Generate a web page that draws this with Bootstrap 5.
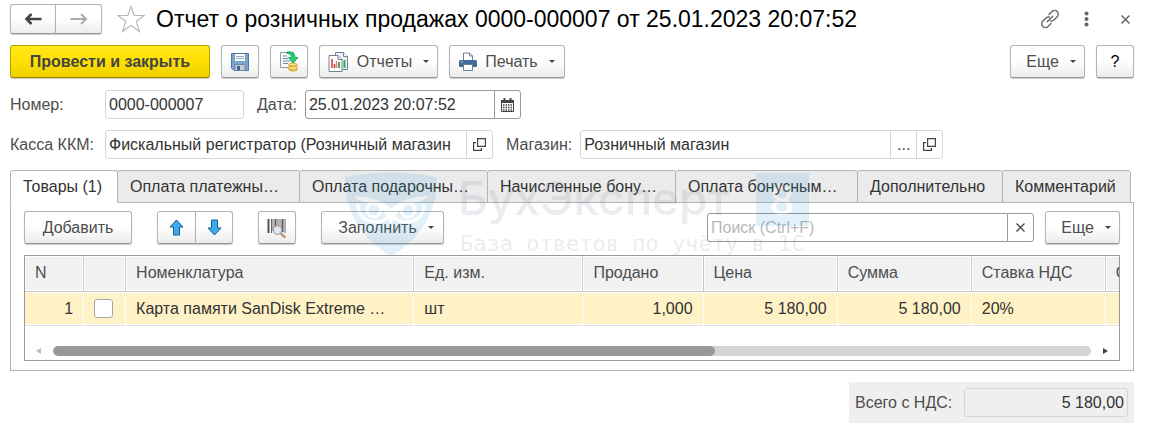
<!DOCTYPE html>
<html lang="ru">
<head>
<meta charset="utf-8">
<meta name="viewport" content="width=device-width, initial-scale=1">
<title>Отчет о розничных продажах</title>
<link href="https://cdn.jsdelivr.net/npm/bootstrap@5.3.0/dist/css/bootstrap.min.css" rel="stylesheet">
<style>
:root { --line: #b3b3b3; --soft: #d6d6d6; --ink: #333; --label: #4d4d4d; }
body { font-family: "Liberation Sans", Arial, sans-serif; font-size: 16px; line-height: 20px; color: var(--ink); background: #fff; }
.page-wrap { padding: 4px 19px 6px 10px; }
.doc-title { font-size: 23px; line-height: 30px; color: #000; font-weight: 400; margin: 0 0 0 11px; }
.ui-btn { --bs-btn-color: #4d4d4d; --bs-btn-border-color: #b3b3b3; --bs-btn-hover-color: #4d4d4d; --bs-btn-hover-border-color: #999;
  --bs-btn-font-size: 16px; --bs-btn-line-height: 20px; --bs-btn-padding-x: 0; --bs-btn-padding-y: 0; --bs-btn-border-radius: 3px;
  height: 33px; display: inline-flex; align-items: center; justify-content: center; flex: none;
  background-image: linear-gradient(#fff, #fff 45%, #ececec); border-bottom-color: #999; box-shadow: 0 1px 1px #c8c8c8; }
.ui-btn-main { --bs-btn-color: #444; width: 200px; font-weight: 700; border-color: #b8a000; border-bottom-color: #998500;
  background-image: linear-gradient(#ffe81a, #ffe000 50%, #edd000); }
.icon-btn { width: 38px; }
.nav-pair .ui-btn { width: 46px; height: 30px; }
.nav-pair .ui-btn + .ui-btn { width: 47px; }
.star-btn { margin-left: 15px; }
.move-pair { margin: 0 25px; }
.move-pair .ui-btn { width: 39px; }
.move-pair .ui-btn + .ui-btn { width: 38px; }
.toolbar-main { gap: 11px; margin-bottom: 12px; }
.row-gap { margin-top: 11px; }
.caret { width: 0; height: 0; border: 3px solid transparent; border-top-color: #444; border-bottom: 0; margin-left: 11px; }
.more-btn { width: 75px; padding-left: 7px; }
.fill-btn { width: 123px; padding-left: 7px; margin-left: 25px; }
.find-more { margin-left: 11px; }
.drop-a { width: 119px; } .drop-b { width: 116px; } .add-btn { width: 108px; }
.bare { border: 0; background: none; padding: 0; display: flex; color: #666; }
.field-label { color: var(--label); white-space: nowrap; }
.field-label.first { width: 95px; flex: none; }
.field-label.next { margin: 0 8px 0 13px; }
.field { height: 29px; }
.field .form-control { height: 29px; min-height: 0; font-size: 16px; line-height: 20px; padding: 0 3px; color: var(--ink); border-color: var(--soft); border-radius: 3px; background: #fff; }
.field .form-control::placeholder { color: #b8b8b8; }
.field .side-btn { width: 27px; padding: 0; border: 1px solid var(--soft); background: #fff; border-radius: 3px; display: flex; align-items: center; justify-content: center; color: #444; font-size: 16px; line-height: 20px; }
.field.dark .form-control, .field.dark .side-btn { border-color: #999; }
.w-num { width: 139px; flex: none; } .w-date { width: 216px; flex: none; } .w-kassa { width: 388px; } .w-shop { width: 363px; } .w-find { width: 327px; } .w-total { width: 164px; }
.doc-tabs { --bs-nav-tabs-border-width: 0; height: 32px; flex-wrap: nowrap; position: relative; z-index: 1; padding-right: 4px; }
.doc-tabs .nav-item { min-width: 0; flex: none; margin-left: -1px; }
.doc-tabs .nav-item:first-child { margin-left: 0; }
.doc-tabs .nav-link { height: 33px; width: 100%; margin: 0; padding: 5px 12px; color: var(--ink); background: #ebebeb; border: 1px solid var(--line); border-radius: 3px 3px 0 0; white-space: nowrap; overflow: hidden; text-overflow: ellipsis; text-align: left; }
.doc-tabs .nav-link.active { background: #fff; color: var(--ink); border-color: var(--line) var(--line) #fff; }
.tab-a { width: 108px; } .tab-b { width: 183px; } .tab-c { width: 189px; } .tab-d { width: 146px; } .tab-e { width: 129px; }
.tab-body { border: 1px solid var(--line); padding: 8px 13px 9px; }
.grid-box { border: 1px solid #999; overflow: hidden; margin-top: 11px; }
.goods { table-layout: fixed; width: 1215px; margin: 0; border-collapse: separate; border-spacing: 0; }
.goods th { height: 36px; padding: 0 10px 2px; font-weight: 400; color: var(--label); background: #f1f1f1; border-right: 1px solid #c8c8c8; border-bottom: 1px solid #c8c8c8; box-shadow: inset 1px 1px #fff, inset -1px -1px #fff; }
.goods td { height: 34px; padding: 0 10px; background: #fef2c6; border-right: 1px solid #fff; border-bottom: 1px solid #e2e2e2; box-shadow: inset 0 1px #fff, inset 0 -1px #fff; white-space: nowrap; overflow: hidden; text-overflow: ellipsis; }
.goods .form-check-input { width: 19px; height: 19px; margin: 0; display: block; border-color: #a6a6a6; border-radius: 3px; }
.c-n { width: 59px; } .c-chk { width: 42px; } .c-name { width: 288px; } .c-unit { width: 169px; } .c-qty { width: 120px; } .c-sum { width: 134px; }
.scroll-row { padding: 20px 11px 4px; }
.scroll-track { height: 10px; border-radius: 5px; background: #d4d4d4; margin: 0 12px; overflow: hidden; }
.scroll-thumb { height: 10px; border-radius: 5px; background: #999; }
.totals { width: 285px; background: #efefef; padding: 6px; margin-top: 11px; }
.totals .form-control { background: #efefef; text-align: right; }
.stamp { opacity: .15; pointer-events: none; z-index: 5; }
.stamp-name { font: 500 46px Inter, sans-serif; } .stamp-sub { font: 22px "DejaVu Sans Mono", monospace; } .stamp-num { font: 500 40px Inter, sans-serif; }
</style>
</head>
<body>
<main class="page-wrap">
  <header class="d-flex align-items-center">
    <div class="btn-group nav-pair">
      <button class="btn ui-btn" type="button" aria-label="Назад"><svg width="18" height="12" viewBox="0 0 18 12" fill="none" stroke="#444" stroke-width="2.6"><path d="M17.500 6H3M7.500 1 2.500 6l5 5"/></svg></button>
      <button class="btn ui-btn" type="button" aria-label="Вперед"><svg width="18" height="12" viewBox="0 0 18 12" fill="none" stroke="#aaa" stroke-width="2"><path d="M.5 6H16M11 1l5 5-5 5"/></svg></button>
    </div>
    <button class="bare star-btn" type="button" aria-label="В избранное"><svg width="28" height="28" viewBox="0 0 28 28" fill="#fff" stroke="#b4b9bf" stroke-width="1.200"><path d="M14 1.500 17.200 10.500H27L19.200 16.500 22.500 26.500 14 20.500 5.500 26.500 8.800 16.500 1 10.500H10.800Z"/></svg></button>
    <h1 class="doc-title">Отчет о розничных продажах 0000-000007 от 25.01.2023 20:07:52</h1>
    <div class="d-flex align-items-center ms-auto">
      <button class="bare" type="button" aria-label="Ссылка"><svg width="20" height="20" viewBox="0 0 20 20" fill="none" stroke="#6a6a6a" stroke-width="1.500" stroke-linecap="round"><path d="M9 5.500 12 2.500a3.600 3.600 0 0 1 5.200 5.200L13.700 11.200a3.600 3.600 0 0 1-3 .8M11 14.500 8 17.500a3.600 3.600 0 0 1-5.200-5.200L6.300 8.800a3.600 3.600 0 0 1 3-.8M7.300 12.700 12.700 7.300"/></svg></button>
      <button class="bare ms-4" type="button" aria-label="Меню"><svg width="5" height="16" viewBox="0 0 5 16" fill="#666"><circle cx="2.500" cy="2.500" r="2"/><circle cx="2.500" cy="8" r="2"/><circle cx="2.500" cy="13.500" r="2"/></svg></button>
      <button class="bare ms-4 ps-2 me-1" type="button" aria-label="Закрыть"><svg width="9" height="9" viewBox="0 0 9 9" stroke="#666" stroke-width="1.500"><path d="m.5.5 8 8m0-8-8 8"/></svg></button>
    </div>
  </header>

  <div class="d-flex toolbar-main row-gap">
    <button class="btn ui-btn ui-btn-main" type="button">Провести и закрыть</button>
    <button class="btn ui-btn icon-btn" type="button" aria-label="Записать"><svg width="20" height="20" viewBox="0 0 20 20"><path d="M1.500 1.500h17v17H4l-2.500-2.500Z" fill="#7ba3d0" stroke="#5478a3"/><path d="M5 2h10v7H5Z" fill="#fff"/><path d="M6 4.500h8M6 6.500h8" stroke="#9ab"/><path d="M5 12.500h10v6H5Z" fill="#c9ced3" stroke="#6f8aa8"/><path d="M7 14h3v4H7Z" fill="#42658f"/></svg></button>
    <button class="btn ui-btn icon-btn" type="button" aria-label="Провести"><svg width="20" height="21" viewBox="0 0 20 21"><path d="M1.500 1.500h13v15h-13Z" fill="#f6f8fa" stroke="#8b9bad"/><path d="M4 5h4M4 7.500h5M4 10h7M4 12.500h5" stroke="#778899"/><path d="M8 1c5-.8 8 1.500 8 5.500h3L14 12 9.500 6.500h3C12.500 4 11 2.500 8 2.500Z" fill="#21cf7a" stroke="#0a9650" stroke-width=".8"/><path d="M10 13.500v5c0 2 8 2 8 0v-5Z" fill="#eec546" stroke="#b78a1c" stroke-width=".7"/><ellipse cx="14" cy="13.500" rx="4" ry="1.500" fill="#fbe58c" stroke="#b78a1c" stroke-width=".7"/><path d="M10 16c1 1.600 7 1.600 8 0" fill="none" stroke="#fff0a5"/></svg></button>
    <button class="btn ui-btn drop-a" type="button"><svg class="me-2" width="21" height="20" viewBox="0 0 21 20"><path d="M7.500.5h8l4 4v13h-12Z" fill="#eef2f6" stroke="#6d8299"/><path d="M15.500.5v4h4" fill="#fff" stroke="#6d8299"/><path d="M16.500 8v8" stroke="#2fa84f" stroke-width="2"/><path d="M1 3.500h9l4 4v12H1Z" fill="#fff" stroke="#6d8299"/><path d="M10 3.500v4h4" fill="#dfe6ee" stroke="#6d8299"/><path d="M4 7v9M6.500 12v4" stroke="#d9423a" stroke-width="1.600"/><path d="M8.500 9v7" stroke="#e08080" stroke-width="1.500"/><path d="M11 10v6" stroke="#2fa84f" stroke-width="1.800"/></svg>Отчеты<i class="caret"></i></button>
    <button class="btn ui-btn drop-b" type="button"><svg class="me-2" width="18" height="19" viewBox="0 0 18 19"><path d="M4.500 9V1h6l3 3v5" fill="#fff" stroke="#6d8299"/><path d="M10.500 1v3h3" fill="none" stroke="#6d8299"/><rect y="8" width="18" height="7" rx="1.500" fill="#426b99"/><path d="M2 10h2" stroke="#cfe0f0"/><path d="M4.500 12.500h9v6h-9Z" fill="#fff" stroke="#6d8299"/></svg>Печать<i class="caret"></i></button>
    <button class="btn ui-btn more-btn ms-auto" type="button">Еще<i class="caret"></i></button>
    <button class="btn ui-btn icon-btn text-black" type="button">?</button>
  </div>

  <div class="d-flex align-items-center">
    <label class="field-label first" for="num">Номер:</label>
    <div class="field w-num"><input class="form-control" id="num" value="0000-000007"></div>
    <label class="field-label next" for="date">Дата:</label>
    <div class="input-group field dark w-date"><input class="form-control" id="date" value="25.01.2023 20:07:52">
      <button class="side-btn" type="button" aria-label="Календарь"><svg width="13" height="14" viewBox="0 0 13 14"><path d="M.5 2.500h12v11H.5Z" fill="#fff" stroke="#444"/><path d="M0 2h13v3H0Z" fill="#444"/><path d="M3.500 0v3M9.500 0v3" stroke="#444" stroke-width="2"/><path d="M2 7h9M2 9.500h9M2 12h9" stroke="#444" stroke-width="1.500" stroke-dasharray="1.500 1"/></svg></button></div>
  </div>

  <div class="d-flex align-items-center row-gap">
    <label class="field-label first" for="kassa">Касса ККМ:</label>
    <div class="input-group field w-kassa"><input class="form-control" id="kassa" value="Фискальный регистратор (Розничный магазин">
      <button class="side-btn" type="button" aria-label="Открыть"><svg width="13" height="13" viewBox="0 0 13 13" fill="none" stroke="#444" stroke-width="1.200"><path d="M4.600.6h7.800v7.800H4.600ZM3 4.600H.6v7.800h7.800V10"/></svg></button></div>
    <label class="field-label next" for="shop">Магазин:</label>
    <div class="input-group field w-shop"><input class="form-control" id="shop" value="Розничный магазин">
      <button class="side-btn" type="button" aria-label="Выбрать">...</button>
      <button class="side-btn" type="button" aria-label="Открыть"><svg width="13" height="13" viewBox="0 0 13 13" fill="none" stroke="#444" stroke-width="1.200"><path d="M4.600.6h7.800v7.800H4.600ZM3 4.600H.6v7.800h7.800V10"/></svg></button></div>
  </div>

  <ul class="nav nav-tabs doc-tabs row-gap">
    <li class="nav-item tab-a"><button class="nav-link active" type="button">Товары (1)</button></li>
    <li class="nav-item tab-b"><button class="nav-link" type="button">Оплата платежны…</button></li>
    <li class="nav-item tab-c"><button class="nav-link" type="button">Оплата подарочны…</button></li>
    <li class="nav-item tab-c"><button class="nav-link" type="button">Начисленные бону…</button></li>
    <li class="nav-item tab-b"><button class="nav-link" type="button">Оплата бонусным…</button></li>
    <li class="nav-item tab-d"><button class="nav-link" type="button">Дополнительно</button></li>
    <li class="nav-item tab-e"><button class="nav-link" type="button">Комментарий</button></li>
  </ul>
  <section class="tab-body">
    <div class="d-flex align-items-center">
      <button class="btn ui-btn add-btn" type="button">Добавить</button>
      <div class="btn-group move-pair">
        <button class="btn ui-btn" type="button" aria-label="Вверх"><svg width="15" height="17" viewBox="0 0 15 17" fill="#3fa9ea" stroke="#0f5f99"><path d="M7.500 1 14 8h-3.500v8h-6V8H1Z"/></svg></button>
        <button class="btn ui-btn" type="button" aria-label="Вниз"><svg width="15" height="17" viewBox="0 0 15 17" fill="#3fa9ea" stroke="#0f5f99"><path d="M7.500 16 14 9h-3.500V1h-6v8H1Z"/></svg></button>
      </div>
      <button class="btn ui-btn icon-btn" type="button" aria-label="Поиск по штрихкоду"><svg width="20" height="20" viewBox="0 0 20 20"><path d="M1.500 1v14M8.500 1v12M15.500 1v13" stroke="#555" stroke-width="2"/><path d="M4.500 1v14M6 1v12M11 1v12M13 1v12M18 1v14" stroke="#666"/><path d="m13.500 15 4 4" stroke="#c39a7c" stroke-width="2.500" stroke-linecap="round"/><circle cx="10.500" cy="12" r="4.300" fill="#d5e7f8" stroke="#b59d92" stroke-width="1.200"/></svg></button>
      <button class="btn ui-btn fill-btn" type="button">Заполнить<i class="caret"></i></button>
      <div class="input-group field dark w-find ms-auto"><input class="form-control" placeholder="Поиск (Ctrl+F)" aria-label="Поиск">
        <button class="side-btn" type="button" aria-label="Очистить"><svg width="9" height="9" viewBox="0 0 9 9" stroke="#444" stroke-width="1.300"><path d="m.5.5 8 8m0-8-8 8"/></svg></button></div>
      <button class="btn ui-btn more-btn find-more" type="button">Еще<i class="caret"></i></button>
    </div>
    <div class="grid-box">
      <table class="goods">
        <colgroup><col class="c-n"><col class="c-chk"><col class="c-name"><col class="c-unit"><col class="c-qty"><col class="c-sum"><col class="c-sum"><col class="c-sum"><col class="c-sum"></colgroup>
        <thead><tr><th>N</th><th></th><th>Номенклатура</th><th>Ед. изм.</th><th>Продано</th><th>Цена</th><th>Сумма</th><th>Ставка НДС</th><th>Сумма НДС</th></tr></thead>
        <tbody><tr><td class="text-end">1</td><td><input class="form-check-input" type="checkbox" aria-label="Отметить строку"></td><td>Карта памяти SanDisk Extreme …</td><td>шт</td><td class="text-end">1,000</td><td class="text-end">5 180,00</td><td class="text-end">5 180,00</td><td>20%</td><td></td></tr></tbody>
      </table>
      <div class="scroll-row d-flex align-items-center">
        <svg width="5" height="6" viewBox="0 0 5 6" fill="#bbb"><path d="M5 0v6L0 3Z"/></svg>
        <div class="scroll-track flex-grow-1"><div class="scroll-thumb" style="width:63.8%"></div></div>
        <svg width="5" height="6" viewBox="0 0 5 6" fill="#444"><path d="M0 0v6l5-3Z"/></svg>
      </div>
    </div>
  </section>
  <footer class="totals d-flex align-items-center ms-auto">
    <label class="field-label" for="total">Всего с НДС:</label>
    <div class="field w-total ms-auto"><input class="form-control" id="total" value="5 180,00" readonly></div>
  </footer>
</main>
<div class="stamp position-fixed top-0 start-0 w-100 h-100 d-flex align-items-center justify-content-center">
  <svg width="464" height="86" viewBox="0 0 464 86">
    <path d="M0 5Q46-4 92 5 92 36 76 58 64 74 46 84 28 74 16 58 0 36 0 5Z" fill="#3f9fd4"/>
    <path d="M9 24Q34 25 46 37 58 25 83 24 76 31 68 31 60 32 54 38L46 52 38 38Q32 32 24 31 16 31 9 24Z" fill="#fff"/>
    <g fill="none" stroke="#fff" stroke-width="3"><circle cx="29" cy="38" r="7"/><circle cx="63" cy="38" r="7"/><path d="M13 32q0 17 18 18 8 0 12-5M79 32q0 17-18 18-8 0-12-5"/></g>
    <text class="stamp-name" x="113" y="43" fill="#7a7a9c">БухЭксперт</text>
    <text class="stamp-sub" x="115" y="79" fill="#7a7a9c">База ответов по учёту в 1С</text>
    <path d="M411 1h53v53h-53Z" fill="#3f9fd4"/>
    <text class="stamp-num" x="437" y="43" text-anchor="middle" fill="#fff">8</text>
  </svg>
</div>
<script src="https://cdn.jsdelivr.net/npm/bootstrap@5.3.0/dist/js/bootstrap.bundle.min.js"></script>
</body>
</html>
